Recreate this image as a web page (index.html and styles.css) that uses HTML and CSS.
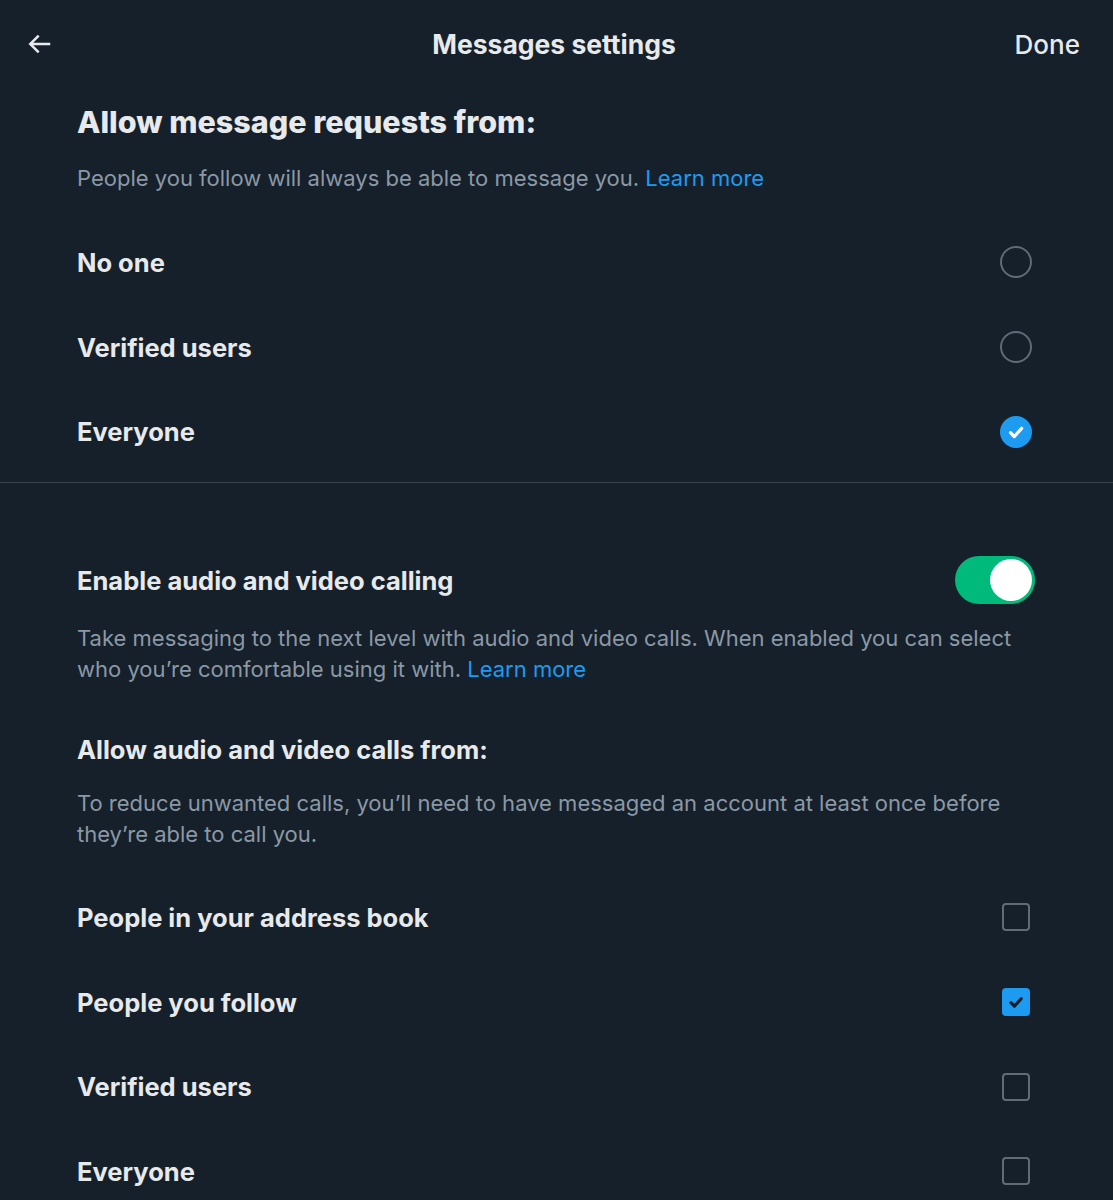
FILE: index.html
```html
<!DOCTYPE html>
<html>
<head>
<meta charset="utf-8">
<link rel="stylesheet" href="styles.css">
</head>
<body>
<div class="screen">
  <header class="topbar">
    <div class="back">
      <svg viewBox="0 0 24 24" width="30" height="30"><path d="M7.414 13l5.043 5.04-1.414 1.42L3.586 12l7.457-7.46 1.414 1.42L7.414 11H21v2H7.414z" fill="#e7e9ea"/></svg>
    </div>
    <div class="title">Messages settings</div>
    <div class="done">Done</div>
  </header>

  <section class="sec sec1">
    <h1 class="h1">Allow message requests from:</h1>
    <p class="desc d1">People you follow will always be able to message you. <span class="link">Learn more</span></p>
    <div class="rows">
      <div class="row"><span class="label">No one</span><span class="ctl"><span class="radio"></span></span></div>
      <div class="row"><span class="label">Verified users</span><span class="ctl"><span class="radio"></span></span></div>
      <div class="row"><span class="label">Everyone</span><span class="ctl"><span class="radio on"><svg viewBox="0 0 24 24" width="26" height="26"><path d="M7 12.6l3.4 3.6 6.8-7.6" fill="none" stroke="#fff" stroke-width="3" stroke-linecap="round" stroke-linejoin="round"/></svg></span></span></div>
    </div>
  </section>

  <div class="divider"></div>

  <section class="sec sec2">
    <div class="toggle-row">
      <span class="label">Enable audio and video calling</span>
      <span class="toggle"><span class="knob"></span></span>
    </div>
    <p class="desc d2">Take messaging to the next level with audio and video calls. When enabled you can select who you’re comfortable using it with. <span class="link">Learn more</span></p>
    <h2 class="h2">Allow audio and video calls from:</h2>
    <p class="desc d3">To reduce unwanted calls, you’ll need to have messaged an account at least once before they’re able to call you.</p>
    <div class="rows crows">
      <div class="row"><span class="label">People in your address book</span><span class="ctl"><span class="box"></span></span></div>
      <div class="row"><span class="label">People you follow</span><span class="ctl"><span class="box on"><svg viewBox="0 0 24 24" width="26" height="26"><path d="M7 12.6l3.4 3.6 6.8-7.6" fill="none" stroke="#15202b" stroke-width="3.2" stroke-linecap="round" stroke-linejoin="round"/></svg></span></span></div>
      <div class="row"><span class="label">Verified users</span><span class="ctl"><span class="box"></span></span></div>
      <div class="row"><span class="label">Everyone</span><span class="ctl"><span class="box"></span></span></div>
    </div>
  </section>
</div>
</body>
</html>
```
FILE: styles.css
```css
* { box-sizing: border-box; }
html, body { margin: 0; padding: 0; background: #15202b; }
body {
  font-family: Inter, "Liberation Sans", sans-serif;
  color: #e7e9ea;
  width: 1113px;
  height: 1200px;
  overflow: hidden;
}
.screen { width: 1113px; }
.topbar {
  height: 88px;
  display: grid;
  grid-template-columns: 1fr auto 1fr;
  align-items: center;
  padding: 0 33px 0 24px;
}
.back { width: 30px; height: 30px; display: flex; }
.title {
  font-size: 26.5px;
  font-weight: 700;
  transform: translateX(2px);
}
.done { font-size: 26px; font-weight: 500; justify-self: end; }
.sec { padding: 0 78px 0 77px; }
.h1 {
  margin: 16px 0 0;
  font-size: 30.5px;
  line-height: 36px;
  font-weight: 800;
}
.desc {
  margin: 0;
  font-size: 22px;
  line-height: 31px;
  color: #8b98a5;
}
.link { color: #1d9bf0; }
.d1 { margin-top: 23px; }
.rows { margin-top: 26px; }
.row {
  height: 84.7px;
  display: flex;
  align-items: center;
  justify-content: space-between;
}
.label { font-size: 25.5px; font-weight: 700; }
.ctl { width: 32px; height: 32px; margin-right: 3px; display: flex; align-items: center; justify-content: center; }
.radio {
  width: 32px; height: 32px; border-radius: 50%;
  border: 2px solid #5f6b77;
  display: flex; align-items: center; justify-content: center;
}
.radio.on { background: #1d9bf0; border-color: #1d9bf0; }
.divider { height: 1px; background: #38444d; margin-top: 8px; }
.toggle-row {
  margin-top: 73px;
  height: 48px;
  display: flex;
  align-items: center;
  justify-content: space-between;
}
.toggle {
  width: 80px; height: 48px; border-radius: 24px;
  background: #00ba7c;
  display: flex; align-items: center; justify-content: flex-end;
  padding: 3px;
}
.knob { width: 42px; height: 42px; border-radius: 50%; background: #fff; }
.d2 { margin-top: 19px; }
.h2 {
  margin: 47px 0 0;
  font-size: 25.5px;
  line-height: 36px;
  font-weight: 700;
}
.d3 { margin-top: 20px; }
.crows { margin-top: 25px; }
.box {
  width: 28px; height: 28px; border-radius: 4px;
  border: 2px solid #5f6b77;
  display: flex; align-items: center; justify-content: center;
}
.box.on { background: #1d9bf0; border-color: #1d9bf0; }
```
